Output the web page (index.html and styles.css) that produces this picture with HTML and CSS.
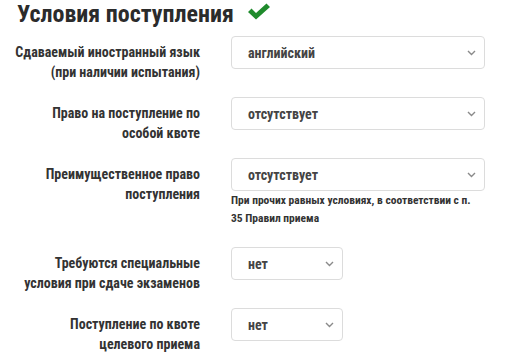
FILE: index.html
```html
<!DOCTYPE html>
<html>
<head>
  <title>Условия поступления</title>
  <link rel="stylesheet" href="styles.css">
</head>
<body>

  <h1 class="title">
    Условия поступления
    <svg class="check" width="24" height="17" viewBox="0 0 24 17">
      <path d="M1 9 L4.5 5.5 L9 10 L19.5 0.5 L23 4 L9 16.5 Z" fill="#1f8b2c"/>
    </svg>
  </h1>

  <div class="form">
    <div class="label">Сдаваемый иностранный язык<br>(при наличии испытания)</div>
    <div class="field">
      <div class="select wide">
        <span>английский</span>
        <svg class="chevron" width="9" height="6" viewBox="0 0 9 6"><path d="M1 1 L4.5 4.5 L8 1" fill="none" stroke="#8a8a8a" stroke-width="1.4"/></svg>
      </div>
    </div>

    <div class="label">Право на поступление по<br>особой квоте</div>
    <div class="field">
      <div class="select wide">
        <span>отсутствует</span>
        <svg class="chevron" width="9" height="6" viewBox="0 0 9 6"><path d="M1 1 L4.5 4.5 L8 1" fill="none" stroke="#8a8a8a" stroke-width="1.4"/></svg>
      </div>
    </div>

    <div class="label">Преимущественное право<br>поступления</div>
    <div class="field">
      <div class="select wide">
        <span>отсутствует</span>
        <svg class="chevron" width="9" height="6" viewBox="0 0 9 6"><path d="M1 1 L4.5 4.5 L8 1" fill="none" stroke="#8a8a8a" stroke-width="1.4"/></svg>
      </div>
      <div class="hint">При прочих равных условиях, в соответствии с п. 35 Правил приема</div>
    </div>

    <div class="label">Требуются специальные<br>условия при сдаче экзаменов</div>
    <div class="field">
      <div class="select narrow">
        <span>нет</span>
        <svg class="chevron" width="9" height="6" viewBox="0 0 9 6"><path d="M1 1 L4.5 4.5 L8 1" fill="none" stroke="#8a8a8a" stroke-width="1.4"/></svg>
      </div>
    </div>

    <div class="label">Поступление по квоте<br>целевого приема</div>
    <div class="field">
      <div class="select narrow">
        <span>нет</span>
        <svg class="chevron" width="9" height="6" viewBox="0 0 9 6"><path d="M1 1 L4.5 4.5 L8 1" fill="none" stroke="#8a8a8a" stroke-width="1.4"/></svg>
      </div>
    </div>
  </div>

</body>
</html>
```
FILE: styles.css
```css
body {
  margin: 0;
  background: #fff;
  color: #333;
  font-family: "Roboto Condensed", Roboto, sans-serif;
}

.title {
  display: flex;
  align-items: center;
  gap: 13px;
  margin: 0 0 8px 17px;
  font-size: 24px;
  line-height: 28px;
  font-weight: bold;
  color: #2b2b2b;
}

.check {
  margin-top: -6px;
}

.form {
  display: grid;
  grid-template-columns: 200px 1fr;
  column-gap: 31px;
  row-gap: 15px;
}

.label {
  padding-top: 6px;
  text-align: right;
  white-space: nowrap;
  font-size: 14px;
  line-height: 20px;
  font-weight: bold;
  color: #333;
}

.select {
  display: flex;
  align-items: center;
  justify-content: space-between;
  box-sizing: border-box;
  height: 33px;
  padding: 0 8px 0 16px;
  border: 1px solid #dcdcdc;
  border-radius: 4px;
  font-size: 14px;
  font-weight: bold;
  color: #444;
}

.select.wide {
  width: 254px;
}

.select.narrow {
  width: 112px;
}

.hint {
  max-width: 250px;
  margin-bottom: 5px;
  font-size: 11.5px;
  line-height: 18px;
  font-weight: bold;
  color: #333;
}
```
